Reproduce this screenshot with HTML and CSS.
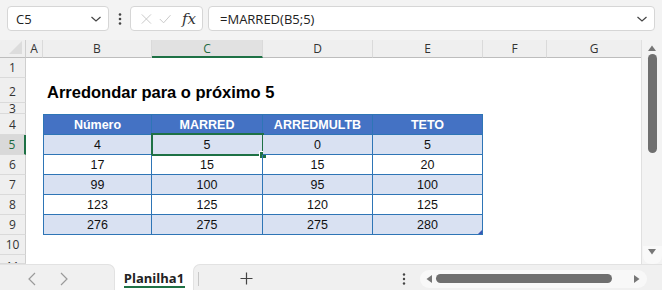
FILE: index.html
```html
<!DOCTYPE html>
<html lang="pt">
<head>
  <meta charset="UTF-8" />
  <title>Planilha1 - MARRED</title>
  <link rel="stylesheet" href="styles.css">
</head>
<body>
  <div class="app">

    <!-- Formula bar -->
    <div class="formula-bar">
      <div class="name-box">
        <span>C5</span>
        <svg class="chev" width="12" height="8" viewBox="0 0 12 8"><path d="M1.5 2 L6 6 L10.5 2" fill="none" stroke="#444" stroke-width="1.2"/></svg>
      </div>
      <svg class="vdots" width="4" height="14" viewBox="0 0 4 14"><circle cx="2" cy="2.5" r="1.3" fill="#444"/><circle cx="2" cy="7" r="1.3" fill="#444"/><circle cx="2" cy="11.5" r="1.3" fill="#444"/></svg>
      <div class="fx-box">
        <svg width="14" height="14" viewBox="0 0 14 14"><path d="M1 1 L13 13 M13 1 L1 13" stroke="#c4c4c4" stroke-width="1.2"/></svg>
        <svg width="16" height="14" viewBox="0 0 16 14"><path d="M1 7 L6 12 L15 2" fill="none" stroke="#c4c4c4" stroke-width="1.2"/></svg>
        <span class="fx">fx</span>
      </div>
      <div class="formula-input">
        <span>=MARRED(B5;5)</span>
        <svg class="chev" width="12" height="8" viewBox="0 0 12 8"><path d="M1.5 2 L6 6 L10.5 2" fill="none" stroke="#444" stroke-width="1.2"/></svg>
      </div>
    </div>

    <!-- Sheet + vertical scrollbar -->
    <div class="workspace">
      <div class="sheet">
        <div class="corner"><div class="corner-tri"></div></div>
        <div class="col-head">A</div>
        <div class="col-head">B</div>
        <div class="col-head active">C</div>
        <div class="col-head">D</div>
        <div class="col-head">E</div>
        <div class="col-head">F</div>
        <div class="col-head last">G</div>

        <div class="row-head r1">1</div>
        <div class="row-head r2">2</div>
        <div class="row-head r3">3</div>
        <div class="row-head r4">4</div>
        <div class="row-head r5 active">5</div>
        <div class="row-head r6">6</div>
        <div class="row-head r7">7</div>
        <div class="row-head r8">8</div>
        <div class="row-head r9">9</div>
        <div class="row-head r10">10</div>
        <div class="row-head r11">11</div>

        <div class="title">Arredondar para o próximo 5</div>

        <div class="tbl">
          <div class="th">Número</div>
          <div class="th">MARRED</div>
          <div class="th">ARREDMULTB</div>
          <div class="th">TETO</div>

          <div class="td band">4</div>
          <div class="td band selected">5<span class="sel-frame"><span class="handle"></span></span></div>
          <div class="td band">0</div>
          <div class="td band">5</div>

          <div class="td">17</div>
          <div class="td">15</div>
          <div class="td">15</div>
          <div class="td">20</div>

          <div class="td band">99</div>
          <div class="td band">100</div>
          <div class="td band">95</div>
          <div class="td band">100</div>

          <div class="td">123</div>
          <div class="td">125</div>
          <div class="td">120</div>
          <div class="td">125</div>

          <div class="td band">276</div>
          <div class="td band">275</div>
          <div class="td band">275</div>
          <div class="td band resize">280</div>
        </div>
      </div>

      <div class="vscroll">
        <svg width="10" height="8" viewBox="0 0 10 8"><path d="M1 7 L5 1.5 L9 7 Z" fill="#777"/></svg>
        <div class="vthumb"></div>
        <div class="vspace"></div>
        <div class="vdown">
          <svg width="10" height="8" viewBox="0 0 10 8"><path d="M1 1 L5 6.5 L9 1 Z" fill="#777"/></svg>
        </div>
      </div>
    </div>

    <!-- Sheet tabs -->
    <div class="tabbar">
      <div class="nav-panel">
        <svg width="8" height="14" viewBox="0 0 8 14"><path d="M7 1 L1 7 L7 13" fill="none" stroke="#9a9a9a" stroke-width="1.2"/></svg>
        <svg width="8" height="14" viewBox="0 0 8 14"><path d="M1 1 L7 7 L1 13" fill="none" stroke="#9a9a9a" stroke-width="1.2"/></svg>
      </div>
      <div class="sheet-tab">Planilha1</div>
      <div class="add-panel">
        <span class="tab-sep"></span>
        <svg class="plus" width="13" height="13" viewBox="0 0 13 13"><path d="M6.5 0.5 V12.5 M0.5 6.5 H12.5" stroke="#444" stroke-width="1.2"/></svg>
        <svg class="hdots" width="4" height="14" viewBox="0 0 4 14"><circle cx="2" cy="2.5" r="1.2" fill="#444"/><circle cx="2" cy="7" r="1.2" fill="#444"/><circle cx="2" cy="11.5" r="1.2" fill="#444"/></svg>
        <div class="hscroll">
          <svg width="8" height="10" viewBox="0 0 8 10"><path d="M7 1 L1.5 5 L7 9 Z" fill="#777"/></svg>
          <div class="hthumb"></div>
          <svg width="8" height="10" viewBox="0 0 8 10"><path d="M1 1 L6.5 5 L1 9 Z" fill="#777"/></svg>
        </div>
      </div>
    </div>

  </div>
</body>
</html>
```

FILE: styles.css
```css
body {
  margin: 0;
  font-family: "Open Sans", "Noto Sans", sans-serif;
  color: #222;
}
.app {
  width: 662px;
  height: 290px;
  background: #f3f3f3;
  display: flex;
  flex-direction: column;
  overflow: hidden;
}

/* formula bar */
.formula-bar {
  height: 40px;
  box-sizing: border-box;
  padding: 6px 7px 9px 7px;
  display: flex;
  align-items: stretch;
}
.name-box,
.fx-box,
.formula-input {
  background: #fff;
  border: 1px solid #d6d6d6;
  border-radius: 4px;
  box-sizing: border-box;
  display: flex;
  align-items: center;
}
.name-box {
  width: 102px;
  padding: 0 6px 0 8px;
  justify-content: space-between;
  font-size: 13px;
}
.vdots {
  align-self: center;
  margin: 0 8px 0 9px;
}
.fx-box {
  width: 73px;
  padding: 0 6px 0 10px;
  gap: 7px;
}
.fx {
  font-family: "DejaVu Serif", "Liberation Serif", serif;
  font-style: italic;
  font-size: 15px;
  color: #333;
  margin-left: 4px;
}
.formula-input {
  flex: 1;
  margin-left: 5px;
  padding: 0 6px 0 11px;
  justify-content: space-between;
  font-size: 13px;
}

/* worksheet */
.workspace {
  height: 224px;
  display: flex;
}
.sheet {
  width: 641px;
  background: #fff;
  display: grid;
  grid-template-columns: 26px 17px 109px 111px 110px 110px 64px 94px;
  grid-template-rows: 18px 20px 25px 11px 21px 20px 20px 20px 20px 20px 20px 9px;
  overflow: hidden;
  border-right: 1px solid #e0e0e0;
}
.corner {
  background: #efefef;
  border-right: 1px solid #cfcfcf;
  border-bottom: 1px solid #bdbdbd;
  position: relative;
}
.corner-tri {
  position: absolute;
  right: 3px;
  bottom: 3px;
  width: 0;
  height: 0;
  border-left: 13px solid transparent;
  border-bottom: 13px solid #dcdcdc;
}
.col-head {
  background: #efefef;
  border-right: 1px solid #dadada;
  border-bottom: 1px solid #bdbdbd;
  font-size: 12px;
  color: #333;
  display: flex;
  align-items: center;
  justify-content: center;
}
.col-head.last {
  border-right: none;
}
.col-head.active {
  background: #e1e1e1;
  color: #1e6b41;
  border-bottom: 2px solid #1e7145;
}
.row-head {
  grid-column: 1;
  background: #efefef;
  border-right: 1px solid #cfcfcf;
  border-bottom: 1px solid #dadada;
  font-size: 12px;
  color: #333;
  display: flex;
  align-items: center;
  justify-content: center;
  overflow: hidden;
}
.row-head.active {
  background: #d9d9d9;
  color: #1e6b41;
  border-right: 2px solid #1e7145;
}
.r1 { grid-row: 2; }
.r2 { grid-row: 3; padding-top: 3px; }
.r3 { grid-row: 4; }
.r4 { grid-row: 5; }
.r5 { grid-row: 6; }
.r6 { grid-row: 7; }
.r7 { grid-row: 8; }
.r8 { grid-row: 9; }
.r9 { grid-row: 10; }
.r10 { grid-row: 11; }
.r11 { grid-row: 12; align-items: flex-start; padding-top: 3px; }

.title {
  grid-row: 3;
  grid-column: 3 / 8;
  font-family: "Liberation Sans", Arial, sans-serif;
  font-weight: bold;
  font-size: 16.5px;
  color: #000;
  padding: 4px 0 0 4px;
  display: flex;
  align-items: center;
}

/* excel table */
.tbl {
  grid-row: 5 / 11;
  grid-column: 3 / 7;
  display: grid;
  grid-template-columns: 109px 111px 110px 110px;
  grid-template-rows: 21px repeat(5, 20px);
  font-family: "Liberation Sans", Arial, sans-serif;
  font-size: 12.5px;
}
.th,
.td {
  border-right: 1px solid #2e75b6;
  border-bottom: 1px solid #2e75b6;
  display: flex;
  align-items: center;
  justify-content: center;
  position: relative;
}
.th {
  background: #4472c4;
  color: #fff;
  font-weight: bold;
  border-top: 1px solid #2e75b6;
}
.th:first-child,
.td:nth-child(4n+1) {
  border-left: 1px solid #2e75b6;
}
.td {
  color: #111;
}
.td.band {
  background: #d9e1f2;
}
.sel-frame {
  position: absolute;
  top: -2px;
  left: -1px;
  right: -2px;
  bottom: -2px;
  border: 2px solid #1e7145;
}
.handle {
  position: absolute;
  right: -5px;
  bottom: -5px;
  width: 6px;
  height: 6px;
  background: #1e7145;
  border: 1px solid #fff;
}
.td.resize::after {
  content: "";
  position: absolute;
  right: 0;
  bottom: 0;
  border-left: 4px solid transparent;
  border-bottom: 4px solid #3a55b4;
}

/* vertical scrollbar */
.vscroll {
  flex: 1;
  display: flex;
  flex-direction: column;
  align-items: center;
  padding-top: 4px;
}
.vthumb {
  width: 9px;
  height: 99px;
  margin-top: 2px;
  background: #6f6f6f;
  border-radius: 5px;
}
.vspace {
  flex: 1;
}
.vdown {
  width: 19px;
  height: 18px;
  background: #f9f9f9;
  border-radius: 0 0 8px 8px;
  display: flex;
  align-items: flex-start;
  justify-content: center;
  padding-top: 2px;
  box-sizing: border-box;
}

/* tabs */
.tabbar {
  height: 26px;
  display: flex;
  background: #fff;
}
.nav-panel {
  width: 115px;
  background: #f0f0f0;
  border-top-right-radius: 7px;
  border-top: 1px solid #e2e2e2;
  border-right: 1px solid #e2e2e2;
  box-sizing: border-box;
  display: flex;
  align-items: center;
  padding: 3px 0 0 28px;
  gap: 24px;
}
.sheet-tab {
  width: 78px;
  font-size: 13px;
  font-weight: bold;
  color: #222;
  display: flex;
  justify-content: center;
  align-items: center;
  padding-top: 1px;
  box-sizing: border-box;
  position: relative;
}
.sheet-tab::after {
  content: "";
  position: absolute;
  left: 9px;
  right: 8px;
  bottom: 2px;
  height: 2px;
  background: #1e7145;
}
.add-panel {
  flex: 1;
  background: #f0f0f0;
  border-top-left-radius: 7px;
  border-top: 1px solid #e2e2e2;
  border-left: 1px solid #e2e2e2;
  box-sizing: border-box;
  display: flex;
  align-items: center;
  padding-top: 2px;
}
.tab-sep {
  width: 1px;
  height: 14px;
  background: #c8c8c8;
  margin-left: 4px;
}
.plus {
  margin-left: 41px;
}
.hdots {
  margin-left: 149px;
}
.hscroll {
  width: 227px;
  height: 18px;
  margin-left: 14px;
  background: #f8f8f8;
  border-radius: 9px;
  display: flex;
  align-items: center;
  padding: 0 6px 0 5px;
  box-sizing: border-box;
  gap: 3px;
}
.hthumb {
  flex: 1;
  height: 9px;
  background: #6f6f6f;
  border-radius: 5px;
  margin-right: 18px;
}
```
